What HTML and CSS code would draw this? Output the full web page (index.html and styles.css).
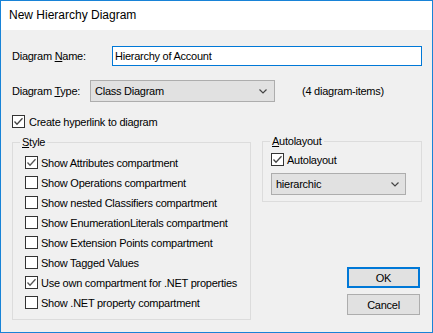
FILE: index.html
```html
<!DOCTYPE html>
<html lang="en">
<head>
  <meta charset="UTF-8" />
  <title>New Hierarchy Diagram</title>
  <link rel="stylesheet" href="styles.css">
</head>
<body>
  <div class="window">
    <div class="titlebar">New Hierarchy Diagram</div>
    <div class="content">
      <div class="row row-name">
        <label class="label label-name">Diagram <u>N</u>ame:</label>
        <input class="textbox" type="text" value="Hierarchy of Account">
      </div>
      <div class="row row-type">
        <label class="label label-type">Diagram <u>T</u>ype:</label>
        <div class="combo combo-type">
          <span>Class Diagram</span>
          <svg class="chevron" width="8" height="5" viewBox="0 0 8 5"><polyline points="0.5,0.5 4,4 7.5,0.5" fill="none" stroke="#444" stroke-width="1.2"/></svg>
        </div>
        <span class="note">(4 diagram-items)</span>
      </div>
      <div class="row row-link">
        <span class="check"><svg width="11" height="11" viewBox="0 0 11 11"><polyline points="1.5,5.5 4,8.2 9.5,2.2" fill="none" stroke="#444" stroke-width="1.3"/></svg></span>
        <span>Create hyperlink to diagram</span>
      </div>

      <div class="lower">
        <div class="group style-group">
          <span class="legend"><u>S</u>tyle</span>
          <div class="check-row"><span class="check"><svg width="11" height="11" viewBox="0 0 11 11"><polyline points="1.5,5.5 4,8.2 9.5,2.2" fill="none" stroke="#555" stroke-width="1.3"/></svg></span><span>Show Attributes compartment</span></div>
          <div class="check-row"><span class="check"></span><span>Show Operations compartment</span></div>
          <div class="check-row"><span class="check"></span><span>Show nested Classifiers compartment</span></div>
          <div class="check-row"><span class="check"></span><span>Show EnumerationLiterals compartment</span></div>
          <div class="check-row"><span class="check"></span><span>Show Extension Points compartment</span></div>
          <div class="check-row"><span class="check"></span><span>Show Tagged Values</span></div>
          <div class="check-row"><span class="check"><svg width="11" height="11" viewBox="0 0 11 11"><polyline points="1.5,5.5 4,8.2 9.5,2.2" fill="none" stroke="#555" stroke-width="1.3"/></svg></span><span>Use own compartment for .NET properties</span></div>
          <div class="check-row"><span class="check"></span><span>Show .NET property compartment</span></div>
        </div>

        <div class="side">
          <div class="group auto-group">
            <span class="legend"><u>A</u>utolayout</span>
            <div class="check-row"><span class="check"><svg width="11" height="11" viewBox="0 0 11 11"><polyline points="1.5,5.5 4,8.2 9.5,2.2" fill="none" stroke="#444" stroke-width="1.3"/></svg></span><span>Autolayout</span></div>
            <div class="combo combo-layout">
              <span>hierarchic</span>
              <svg class="chevron" width="8" height="5" viewBox="0 0 8 5"><polyline points="0.5,0.5 4,4 7.5,0.5" fill="none" stroke="#444" stroke-width="1.2"/></svg>
            </div>
          </div>
          <div class="buttons">
            <button class="btn btn-default">OK</button>
            <button class="btn">Cancel</button>
          </div>
        </div>
      </div>
    </div>
  </div>
</body>
</html>
```

FILE: styles.css
```css
* {
  box-sizing: border-box;
  margin: 0;
  padding: 0;
}
body {
  font-family: 'Liberation Sans', Arial, sans-serif;
  font-size: 11px;
  letter-spacing: -0.25px;
  color: #000;
  background: #f0f0f0;
}
u {
  text-decoration: underline;
  text-underline-offset: 1px;
}
.window {
  width: 433px;
  height: 333px;
  border: 1px solid #1883d7;
  background: #f0f0f0;
  overflow: hidden;
}
.titlebar {
  height: 29px;
  line-height: 29px;
  padding-left: 8px;
  background: #fff;
  font-size: 12px;
  letter-spacing: 0;
}
.content {
  padding: 16px 0 0 11px;
}
.row {
  display: flex;
  align-items: center;
}
.row-name {
  height: 20px;
}
.row-type {
  height: 22px;
  margin-top: 14px;
}
.row-link {
  height: 13px;
  margin-top: 13px;
  gap: 4px;
}
.label-name {
  width: 100px;
}
.label-type {
  width: 78px;
}
.textbox {
  width: 310px;
  height: 20px;
  border: 1px solid #0078d7;
  padding: 0 2px;
  font: inherit;
  letter-spacing: inherit;
  color: #000;
  background: #fff;
  outline: none;
}
.combo {
  display: flex;
  align-items: center;
  justify-content: space-between;
  height: 22px;
  border: 1px solid #adadad;
  background: #e1e1e1;
  padding: 0 7px 0 4px;
}
.combo-type {
  width: 185px;
}
.note {
  margin-left: 27px;
}
.check {
  width: 13px;
  height: 13px;
  border: 1px solid #333;
  background: #fff;
  flex: none;
  display: flex;
}
.lower {
  display: flex;
  align-items: flex-start;
  gap: 11px;
  margin-top: 13px;
}
.group {
  position: relative;
  border: 1px solid #dcdcdc;
}
.legend {
  position: absolute;
  top: -7px;
  left: 7px;
  padding: 0 2px;
  line-height: 13px;
  background: #f0f0f0;
}
.style-group {
  width: 239px;
  height: 178px;
  margin-top: 1px;
  padding: 13px 0 0 12px;
  display: flex;
  flex-direction: column;
  gap: 7px;
}
.check-row {
  display: flex;
  align-items: center;
  height: 13px;
  gap: 3px;
}
.side {
  width: 160px;
}
.auto-group {
  height: 61px;
  padding: 11px 0 0 8px;
}
.combo-layout {
  width: 135px;
  margin-top: 7px;
  padding-right: 6px;
}
.buttons {
  display: flex;
  flex-direction: column;
  align-items: flex-end;
  gap: 6px;
  margin-top: 65px;
  padding-right: 2px;
}
.btn {
  width: 73px;
  height: 21px;
  border: 1px solid #adadad;
  background: #e1e1e1;
  font: inherit;
  letter-spacing: inherit;
  color: #000;
}
.btn-default {
  border: 2px solid #0078d7;
}
```
